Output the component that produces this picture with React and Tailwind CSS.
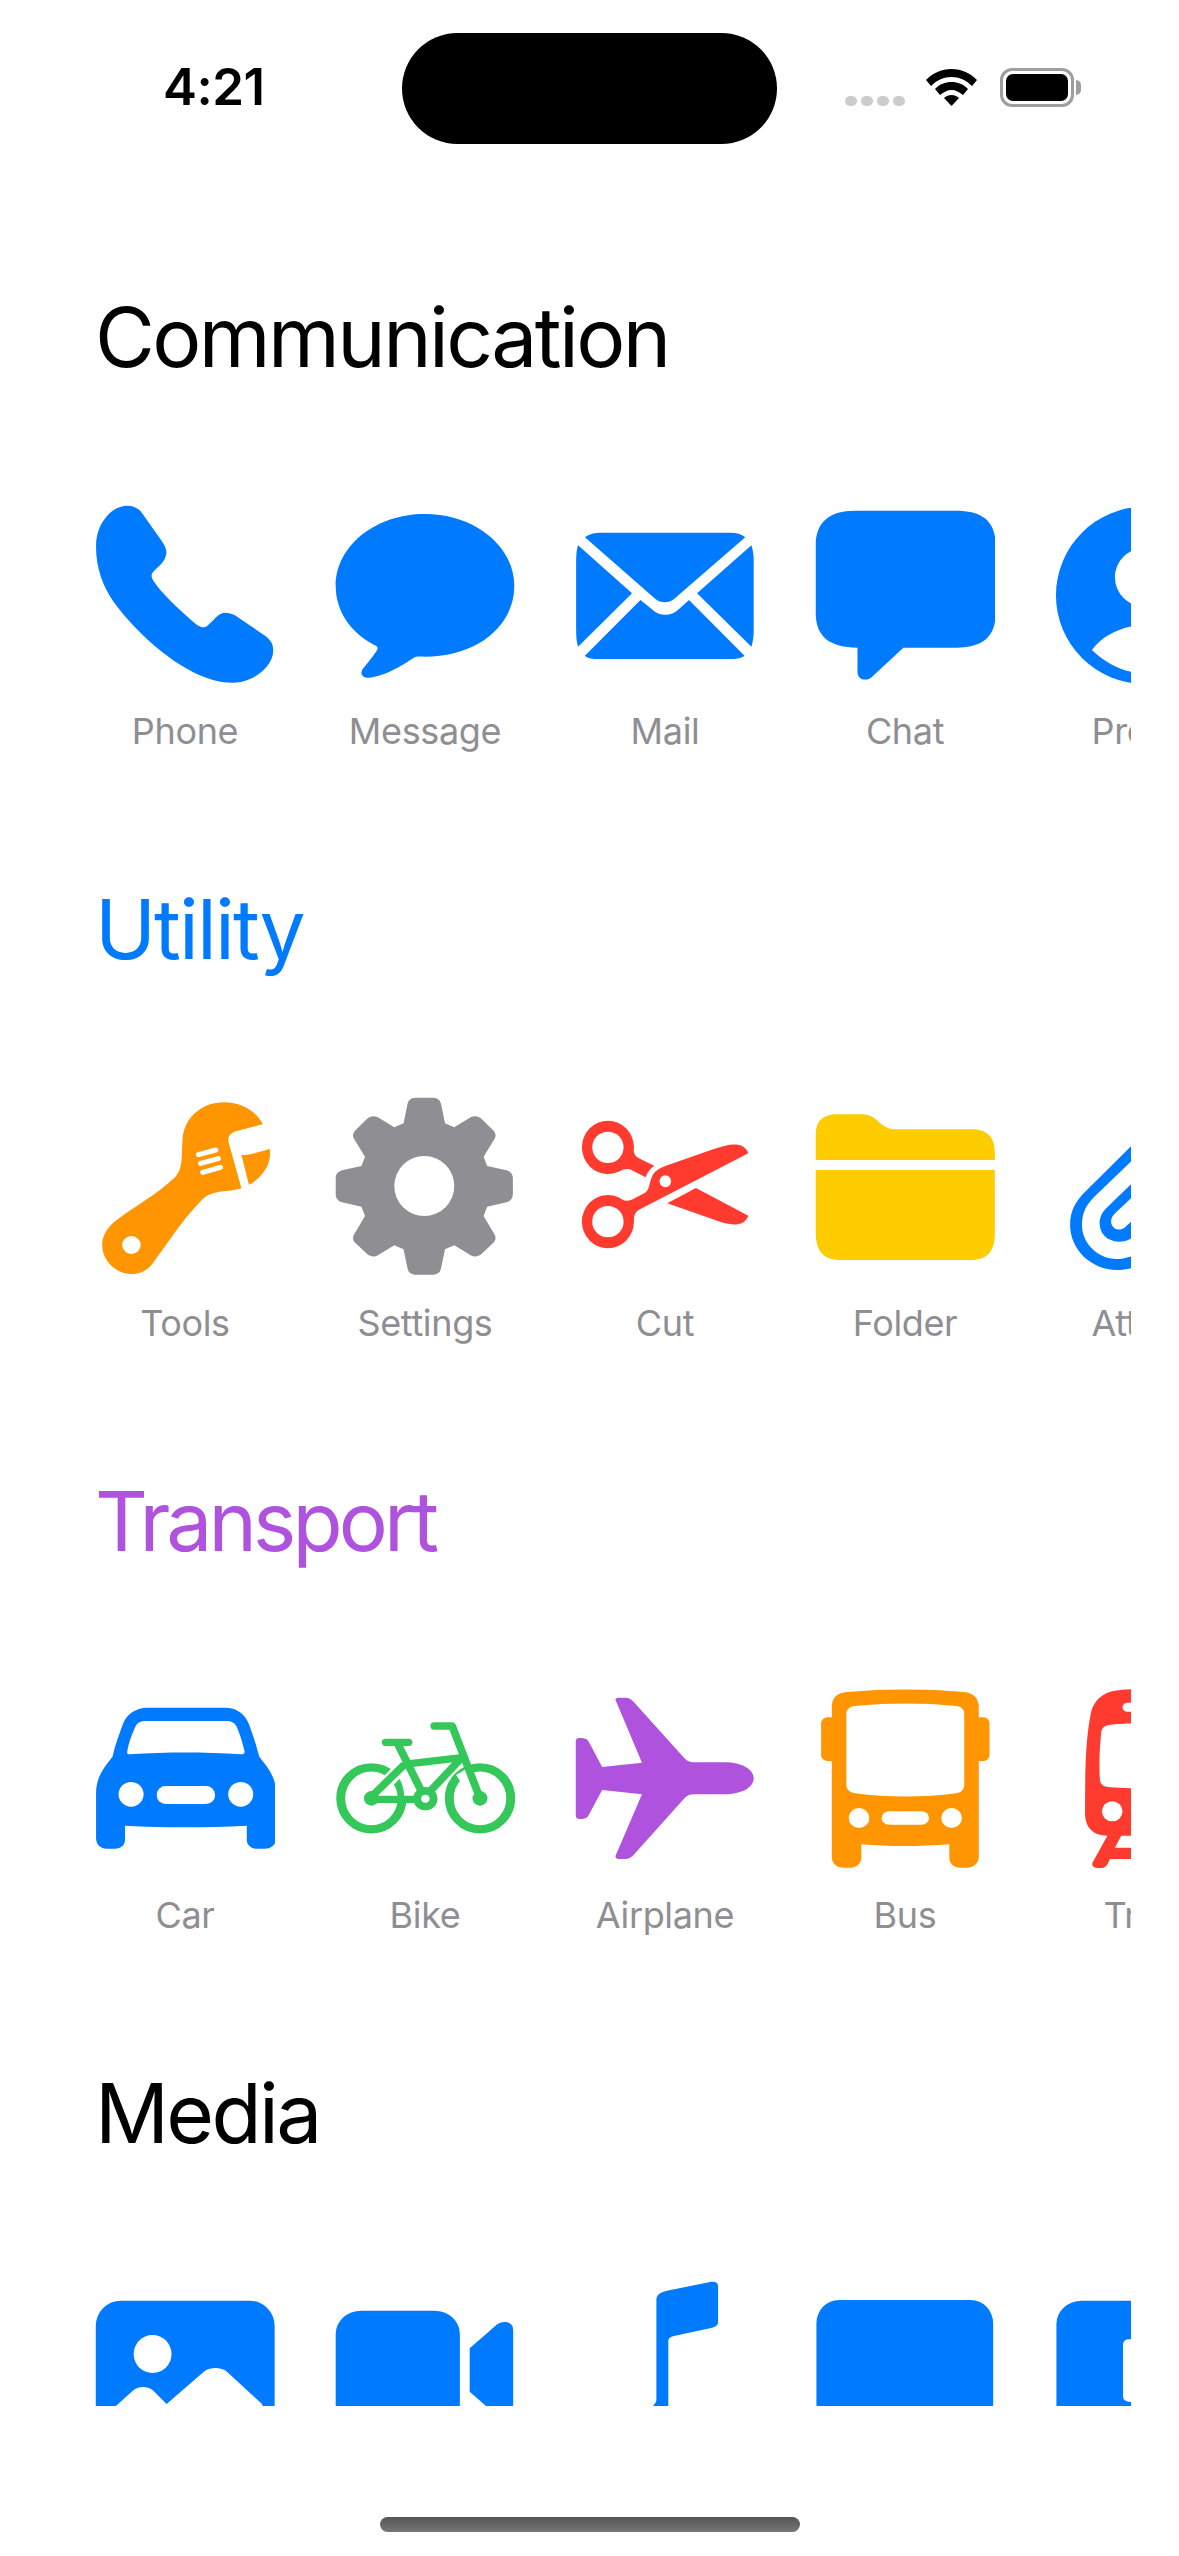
import React from "react";

const FONT = "font-['Inter','Liberation_Sans',sans-serif]";

function Cell({ vb, label, children }) {
  return (
    <div className="flex w-[180px] shrink-0 flex-col items-center">
      <svg width="180" height="180" viewBox={vb} preserveAspectRatio="none" className="block overflow-hidden">
        {children}
      </svg>
      <div className="mt-[24px] h-[44px] text-center text-[36px] leading-[44px] tracking-[-0.35px] whitespace-nowrap text-[#8E8E93]">
        {label}
      </div>
    </div>
  );
}

function Section({ title, color, children }) {
  return (
    <section className="mb-[127px] shrink-0">
      <h2 className={`ml-[95px] h-[100px] text-[82px] leading-[100px] font-normal ${color}`}>{title}</h2>
      <div className="mt-[117px] ml-[95px] flex w-[1036px] gap-[60px] overflow-hidden">{children}</div>
    </section>
  );
}

function Row1() {
  return (
    <>
      <Cell vb="98 75 504 540" label="Phone">
        <path className="fill-[#007AFF]" d="M190 77 C205 77 220 85 228 97 L283 180 C296 200 302 215 295 232 C290 250 270 265 260 277 C254 285 256 292 262 303 C285 340 325 380 360 413 C375 428 390 442 402 442 C410 442 414 436 420 430 C435 415 445 398 463 398 C478 398 490 405 500 413 L575 468 C590 480 597 492 597 512 C597 545 570 575 540 593 C520 604 500 608 482 608 C420 608 350 570 285 515 C230 468 180 410 150 365 C120 320 100 260 101 198 C101 165 110 135 130 110 C145 90 165 77 190 77Z" />
      </Cell>
      <Cell vb="770 75 504 540" label="Message">
        <path className="fill-[#007AFF]" d="M1022 102 C1160 102 1272 197 1272 318 C1272 440 1165 530 1022 530 C1012 530 1003 529 995 531 C985 535 960 560 905 583 C885 591 870 594 858 593 C846 591 840 580 847 568 C860 550 880 525 888 510 C892 503 888 498 880 495 C815 458 772 395 772 318 C772 197 884 102 1022 102Z" />
      </Cell>
      <Cell vb="39 75 470.4 540" label="Mail">
        <g className="fill-[#007AFF]">
          <path d="M65 172 C75 162 90 158 110 158 L440 158 C460 158 475 162 484 172 L297 358 C285 370 263 370 250 358Z" />
          <path d="M47 196 L188 340 L47 500 C43 485 42 470 42 450 L42 245 C42 225 43 210 47 196Z" />
          <path d="M500 196 L358 340 L500 500 C504 485 506 470 506 450 L506 245 C506 225 504 210 500 196Z" />
          <path d="M65 527 L210 360 L240 388 C260 410 290 410 310 388 L337 360 L482 527 C472 535 460 537 440 537 L105 537 C85 537 72 535 65 527Z" />
        </g>
      </Cell>
      <Cell vb="666 75 470.4 540" label="Chat">
        <path className="fill-[#007AFF]" d="M770 92 L1035 92 C1105 92 1138 125 1138 195 L1138 400 C1138 470 1105 503 1035 503 L897 503 L818 587 C805 605 777 603 777 575 L777 503 C705 503 668 470 668 400 L668 195 C668 125 705 92 770 92Z" />
      </Cell>
      <Cell vb="1293.5 75 470.4 540" label="Profile">
        <ellipse className="fill-[#007AFF]" cx="1528" cy="346" rx="232" ry="266" />
        <ellipse className="fill-white" cx="1528" cy="292" rx="78" ry="88" />
        <path className="fill-white" d="M1390 510 C1420 460 1480 435 1528 435 C1580 435 1640 460 1666 510 C1625 555 1575 580 1528 580 C1480 580 1430 555 1390 510Z" />
      </Cell>
    </>
  );
}

function Row2() {
  return (
    <>
      <Cell vb="98 81 504 540" label="Tools">
        <path className="fill-[#FF9500]" d="M460 97 C510 97 550 125 568 163 L495 183 C478 188 468 200 472 217 L508 355 C470 368 430 358 400 387 C350 440 310 505 258 583 C245 600 225 612 200 612 C155 612 118 570 118 525 C118 495 135 470 155 453 C210 408 270 375 322 322 C345 295 340 260 343 210 C346 145 395 97 460 97Z" />
        <path className="fill-[#FF9500]" d="M508 255 C535 255 560 245 587 237 C595 280 565 325 529 344Z" />
        <ellipse className="fill-white" cx="200" cy="525" rx="26" ry="27" />
        <path className="fill-none stroke-white" strokeWidth="15" strokeLinecap="round" d="M388 254 L436 240 M394 280 L443 266 M400 307 L449 292" />
      </Cell>
      <Cell vb="770 81 504 540" label="Settings">
        <path className="fill-[#8E8E93]" d="M995 83 L1045 83 C1058 83 1065 92 1067 102 L1078 160 L1104 172 L1150 142 C1160 136 1172 138 1180 146 L1212 180 C1220 188 1222 198 1216 208 L1186 260 L1196 288 L1250 301 C1262 304 1268 314 1268 324 L1268 372 C1268 384 1262 394 1250 397 L1196 410 L1186 438 L1216 492 C1222 502 1220 512 1212 520 L1180 552 C1172 560 1160 562 1150 556 L1104 526 L1078 538 L1067 595 C1065 606 1058 614 1045 614 L995 614 C982 614 975 606 973 595 L962 538 L936 526 L890 556 C880 562 868 560 860 552 L828 520 C820 512 818 502 824 492 L854 438 L844 410 L790 397 C778 394 772 384 772 372 L772 324 C772 314 778 304 790 301 L844 288 L854 260 L824 208 C818 198 820 188 828 180 L860 146 C868 138 880 136 890 142 L936 172 L962 160 L973 102 C975 92 982 83 995 83Z" />
        <ellipse className="fill-white" cx="1020" cy="348" rx="84" ry="90" />
      </Cell>
      <Cell vb="39 81 470.4 540" label="Cut">
        <g className="fill-[#FF3B30]">
          <ellipse cx="125" cy="232" rx="68" ry="80" />
          <ellipse cx="125" cy="455" rx="68" ry="80" />
          <path d="M175 280 L192 240 C193 255 200 262 210 267 L246 287 C235 297 227 308 224 322 L190 302 C175 293 165 298 150 306Z" />
          <path d="M492 250 L205 420 C195 428 192 440 193 455 L150 385 C165 392 178 395 190 388 L220 370 C235 360 232 340 240 320 C247 303 258 296 275 288 L400 238 C440 222 480 212 492 250Z" />
          <path d="M355 354 L492 437 C480 475 440 465 405 450 L280 400Z" />
        </g>
        <ellipse className="fill-white" cx="125" cy="232" rx="41" ry="47" />
        <ellipse className="fill-white" cx="125" cy="455" rx="41" ry="47" />
        <ellipse className="fill-white" cx="275" cy="334" rx="15" ry="18" />
      </Cell>
      <Cell vb="666 81 470.4 540" label="Folder">
        <g className="fill-[#FFCC00]">
          <path d="M668 270 L668 195 C668 150 690 133 725 133 L790 133 C830 133 835 178 875 178 L1075 178 C1120 178 1136 205 1136 250 L1136 270Z" />
          <path d="M668 300 L1136 300 L1136 490 C1136 545 1115 570 1075 570 L730 570 C690 570 668 545 668 490Z" />
        </g>
      </Cell>
      <Cell vb="1293.5 81 470.4 540" label="Attach">
        <g className="fill-[#007AFF]">
          <path d="M1500 220 L1375 362 C1345 395 1333 425 1333 465 C1333 540 1390 600 1455 600 C1470 600 1485 598 1500 592 L1500 556 C1485 563 1465 567 1455 567 C1405 567 1364 520 1364 465 C1364 430 1375 405 1395 382 L1500 266Z" />
          <path d="M1500 334 L1430 412 C1415 428 1410 445 1410 460 C1410 490 1430 515 1460 515 C1475 515 1490 510 1500 498 L1500 447 L1478 470 C1470 480 1450 485 1442 465 C1437 450 1442 438 1452 428 L1500 376Z" />
        </g>
      </Cell>
    </>
  );
}

function Row3() {
  return (
    <>
      <Cell vb="98 87 504 540" label="Car">
        <path className="fill-[#007AFF]" d="M240 143 L465 143 C500 145 520 165 530 195 C545 240 552 265 558 290 C575 315 605 345 605 400 L605 535 C605 555 590 566 575 566 L550 566 C535 566 523 555 523 540 L523 497 C400 503 300 503 182 497 L182 540 C182 555 170 566 155 566 L130 566 C115 566 101 555 101 535 L101 400 C101 345 130 315 147 290 C153 260 165 225 177 190 C187 163 210 145 240 143Z" />
        <g className="fill-white">
          <path d="M235 183 L470 183 C485 185 492 192 496 203 C505 225 513 255 517 275 C517 281 513 283 508 283 C400 276 300 276 195 283 C190 283 187 280 188 275 C192 250 200 225 211 200 C216 190 222 185 235 183Z" />
          <ellipse cx="199" cy="403" rx="35" ry="37" />
          <ellipse cx="506" cy="403" rx="35" ry="37" />
          <rect x="271" y="378" width="163" height="54" rx="25" ry="25" />
        </g>
      </Cell>
      <Cell vb="770 87 504 540" label="Bike">
        <g className="fill-none">
          <ellipse className="stroke-[#34C759]" strokeWidth="25" cx="872" cy="415" rx="86" ry="93" />
          <ellipse className="stroke-[#34C759]" strokeWidth="25" cx="1176" cy="415" rx="86" ry="93" />
          <path className="stroke-white" strokeWidth="38" d="M872 415 L960 318 M955 325 C975 355 985 385 982 420 M1125 335 L1176 415" />
          <path className="stroke-[#34C759]" strokeLinecap="round" strokeLinejoin="round" strokeWidth="22" d="M912 247 L976 247 M945 250 L1022 415 M1048 198 L1098 198 L1176 415 M980 311 L1125 293 L1022 410 M872 418 L1022 418 M872 410 L960 318" />
        </g>
        <ellipse className="fill-[#34C759]" cx="872" cy="415" rx="21" ry="22" />
        <ellipse className="fill-[#34C759]" cx="1176" cy="415" rx="21" ry="22" />
        <ellipse className="fill-[#34C759]" cx="1023" cy="416" rx="34" ry="35" />
        <ellipse className="fill-white" cx="1023" cy="416" rx="12" ry="12" />
      </Cell>
      <Cell vb="39 87 470.4 540" label="Airplane">
        <path className="fill-[#AF52DE]" d="M145 120 C143 115 148 113 155 113 L170 113 C180 113 187 118 192 125 L325 295 C332 303 338 307 350 307 L430 307 C475 307 506 328 506 355 C506 382 475 403 430 403 L350 403 C338 403 332 407 325 415 L192 585 C187 592 180 597 170 597 L155 597 C148 597 143 592 145 587 L214 403 L110 390 L75 465 C72 473 65 477 55 477 L50 477 C44 477 41 473 41 465 L41 245 C41 238 44 234 50 234 L55 234 C65 234 72 238 75 245 L110 321 L214 308Z" />
      </Cell>
      <Cell vb="666 87 470.4 540" label="Bus">
        <path className="fill-[#FF9500]" d="M710 172 L710 140 C710 112 725 98 750 96 C850 86 960 86 1055 96 C1080 98 1094 115 1094 140 L1094 172 L1105 172 C1115 172 1122 180 1122 190 L1122 285 C1122 295 1115 303 1105 303 L1094 303 L1094 590 C1094 610 1080 623 1062 623 L1045 623 C1028 623 1017 610 1017 592 L1017 553 C940 560 860 560 787 553 L787 592 C787 610 775 623 758 623 L742 623 C722 623 710 610 710 590 L710 303 L700 303 C690 303 682 295 682 285 L682 190 C682 180 690 172 700 172Z" />
        <g className="fill-white">
          <path d="M770 138 C860 128 950 128 1035 138 C1048 140 1056 148 1056 160 L1056 375 C1056 388 1048 397 1035 400 C950 413 860 413 770 400 C757 397 748 388 748 375 L748 160 C748 148 757 140 770 138Z" />
          <ellipse cx="781" cy="474" rx="27" ry="30" />
          <ellipse cx="1023" cy="474" rx="27" ry="30" />
          <rect x="840" y="454" width="124" height="40" rx="20" ry="20" />
        </g>
      </Cell>
      <Cell vb="1293.5 87 470.4 540" label="Train">
        <g className="fill-[#FF3B30]">
          <path d="M1528 87 C1490 87 1470 88 1450 92 C1415 98 1395 125 1388 155 C1375 230 1372 300 1372 460 C1372 505 1395 527 1430 527 L1626 527 C1661 527 1684 505 1684 460 C1684 300 1681 230 1668 155 C1661 125 1641 98 1606 92 C1586 88 1566 87 1528 87Z" />
          <path d="M1434 520 L1392 607 C1388 618 1395 624 1405 624 L1418 624 C1425 622 1428 618 1431 612 L1437 597 L1530 597 L1530 563 L1450 563 L1470 520Z" />
        </g>
        <g className="fill-white">
          <path d="M1528 190 C1480 190 1450 192 1435 195 C1422 197 1415 205 1414 220 C1410 270 1408 320 1411 360 C1412 372 1420 380 1432 381 C1470 385 1500 385 1528 385 L1560 385 L1560 190Z" />
          <rect x="1470" y="128" width="90" height="27" rx="13" ry="13" />
          <ellipse cx="1443" cy="454" rx="27" ry="30" />
        </g>
      </Cell>
    </>
  );
}

function Row4() {
  return (
    <>
      <Cell vb="49.9 63 256.6 540" label="Photos">
        <rect className="fill-[#007AFF]" x="51" y="122" width="255" height="416" rx="36" ry="76" />
        <ellipse className="fill-white" cx="132" cy="282" rx="27" ry="57" />
        <path className="fill-white" d="M68 460 L105 390 C112 378 125 378 132 390 L152 432 L205 335 C213 320 230 320 238 335 L288 432 L292 460Z" />
      </Cell>
      <Cell vb="392 63 256.6 540" label="Video">
        <rect className="fill-[#007AFF]" x="393" y="152" width="177" height="358" rx="36" ry="70" />
        <path className="fill-[#007AFF]" d="M584 265 L622 195 C630 180 646 182 646 210 L646 450 C646 478 630 480 622 465 L584 395Z" />
      </Cell>
      <Cell vb="734 63 256.6 540" label="Music">
        <path className="fill-[#007AFF]" d="M850 120 C850 105 855 97 865 92 L925 67 C933 63 938 68 938 78 L938 185 C938 195 935 200 928 204 L875 228 C870 230 867 235 867 242 L867 470 L835 470 L846 436 C849 430 850 425 850 418Z" />
      </Cell>
      <Cell vb="1076 63 256.6 540" label="Screen">
        <rect className="fill-[#007AFF]" x="1078" y="120" width="252" height="380" rx="32" ry="70" />
      </Cell>
      <Cell vb="1418 63 256.6 540" label="Files">
        <rect className="fill-[#007AFF]" x="1420" y="122" width="254" height="416" rx="36" ry="70" />
        <rect className="fill-white" x="1515" y="238" width="120" height="187" rx="8" ry="15" />
      </Cell>
    </>
  );
}

export default function App() {
  return (
    <div className={`h-[2556px] w-[1179px] overflow-hidden bg-white ${FONT}`}>
      <header className="relative flex h-[177px] items-start justify-between pt-[56px] pr-[98px] pl-[163px]">
        <div className="text-[51px] leading-[62px] font-semibold tracking-[-0.5px] text-black">4:21</div>
        <div className="absolute top-[33px] left-[402px] h-[111px] w-[375px] rounded-full bg-black" />
        <div className="mt-[12px] flex items-end">
          <div className="mr-[21px] mb-[1px] flex gap-[4px]">
            <span className="h-[10px] w-[12px] rounded-full bg-[#CCCCCC]" />
            <span className="h-[10px] w-[12px] rounded-full bg-[#CCCCCC]" />
            <span className="h-[10px] w-[12px] rounded-full bg-[#CCCCCC]" />
            <span className="h-[10px] w-[12px] rounded-full bg-[#CCCCCC]" />
          </div>
          <svg width="51" height="37" viewBox="0 0 51 37" className="mr-[23px] mb-[1px] block fill-black">
            <path d="M0 11 C7 4 15 0 25.5 0 C36 0 44 4 51 11 L46 17 C40 11 33 8 25.5 8 C18 8 11 11 5 17Z" />
            <path d="M9 20 C14 15 19 13 25.5 13 C32 13 37 15 42 20 L37 26 C33 23 30 21 25.5 21 C21 21 18 23 14 26Z" />
            <path d="M18 29 C20 27 23 26 25.5 26 C28 26 31 27 33 29 L25.5 37Z" />
          </svg>
          <div className="flex items-center">
            <div className="flex h-[39px] w-[74px] items-center justify-center rounded-[12px] border-[3px] border-[#9E9E9E]">
              <div className="h-[27px] w-[62px] rounded-[7px] bg-black" />
            </div>
            <div className="ml-[2px] h-[15px] w-[5px] rounded-r-full bg-[#9E9E9E]" />
          </div>
        </div>
      </header>
      <main className="flex h-[2229px] flex-col overflow-hidden pt-[111px]">
        <Section title="Communication" color="tracking-[-2.6px] text-black"><Row1 /></Section>
        <Section title="Utility" color="tracking-[-1.9px] text-[#007AFF]"><Row2 /></Section>
        <Section title="Transport" color="tracking-[-3.9px] text-[#AF52DE]"><Row3 /></Section>
        <Section title="Media" color="tracking-[-2.7px] text-black"><Row4 /></Section>
      </main>
      <div className="flex justify-center pt-[111px]">
        <div className="h-[15px] w-[420px] rounded-full bg-gradient-to-b from-[#555555] to-[#777777]" />
      </div>
    </div>
  );
}
